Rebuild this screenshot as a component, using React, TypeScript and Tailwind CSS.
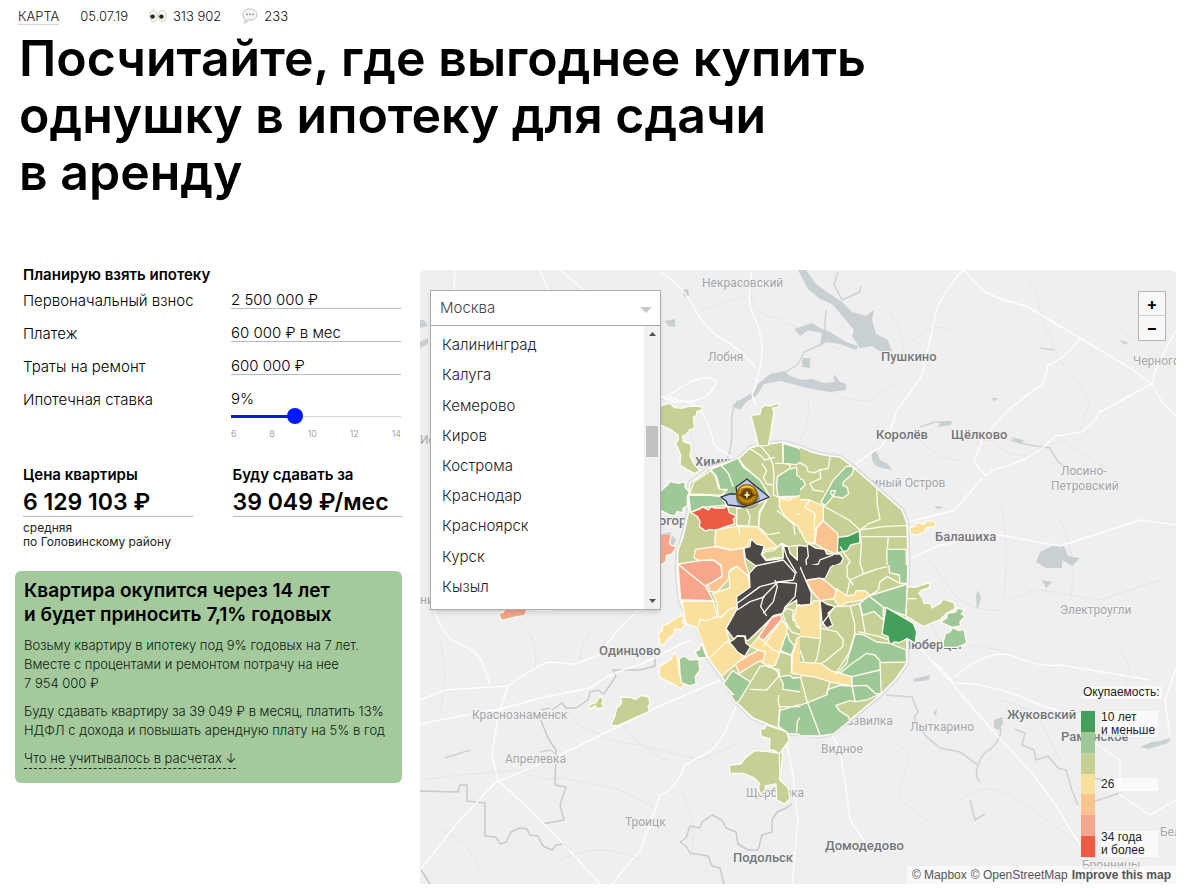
import type React from "react"
import { useState } from "react"

const cities = [
  "Калининград",
  "Калуга",
  "Кемерово",
  "Киров",
  "Кострома",
  "Краснодар",
  "Красноярск",
  "Курск",
  "Кызыл",
]

const GREEN = "#9fc898"
const DARK_GREEN = "#449f5d"
const OLIVE = "#c6cf94"
const YELLOW = "#fbdf9d"
const ORANGE = "#fac38f"
const SALMON = "#f5a68d"
const RED = "#ed5b44"
const BLACK = "#4b4846"

const scale = [DARK_GREEN, GREEN, OLIVE, YELLOW, ORANGE, SALMON, RED]

type Sheet = {
  id: string
  clip: string
  transform: string
  areas: [string, string][]
  lines: string[]
}

// the city is stored as sheets, each with its own origin, 3 units per map unit
const sheets: Sheet[] = [
  {
    id: "north-west",
    clip: "M600 380H800V535H600Z",
    transform: "translate(650 380) scale(.3333)",
    areas: [
      [OLIVE, "20,80 60,70 72,82 95,85 118,78 155,80 157,88 140,95 140,106 130,112 134,145 118,150 110,162 98,168 100,185 122,192 124,212 120,225 130,250 150,272 135,281 110,268 90,255 92,225 82,200 75,192 85,180 84,165 60,148 20,130"],
      [GREEN, "20,345 55,312 60,304 85,310 106,304 105,322 118,335 112,350 112,378 98,385 100,398 80,395 76,408 60,405 20,385"],
      [OLIVE, "303,106 330,103 334,84 345,75 362,78 387,69 385,82 368,84 372,100 368,118 362,160 355,196 325,198 318,165"],
      [OLIVE, "118,342 132,305 182,272 196,288 206,325 230,333 212,346 180,344"],
      [GREEN, "182,268 225,252 264,234 280,262 292,270 330,300 360,350 300,385 235,380 215,350 232,328 210,328 200,290"],
      [GREEN, "116,345 180,346 213,350 232,375 178,380 156,382 122,397"],
      [RED, "122,397 152,386 156,380 175,390 184,380 192,384 222,384 232,378 238,398 260,408 250,418 254,432 220,442 200,452 178,448 168,454 148,440 150,425 142,410"],
      [GREEN, "398,190 440,202 478,224 465,236 440,254 400,250"],
      [GREEN, "382,290 415,268 440,262 440,285 455,295 464,325 456,348 384,350 380,320"],
      [OLIVE, "260,385 300,380 350,360 330,400 325,440 260,436"],
      [YELLOW, "388,354 440,350 500,330 520,330 520,430 495,430 500,510 470,510 445,440 410,415 388,382"],
      [YELLOW, "196,450 252,440 320,440 350,470 385,510 200,506"],
      [ORANGE, "498,440 530,430 530,520 500,520"],
      [SALMON, "20,482 40,474 62,464 66,470 54,490 20,490"],
    ],
    lines: [
      "300,206 330,225 345,240 375,232",
      "330,196 355,225 368,250 372,280 370,345 390,354",
      "398,188 400,250 418,252 422,266",
      "335,250 350,272 340,292 350,312 368,315",
      "375,250 400,250",
      "478,224 455,250 470,262 510,252",
      "210,252 235,280 250,320",
      "265,234 285,262 330,300",
      "350,360 328,395 326,440 352,465 390,458",
      "380,390 430,432 436,470 455,490",
      "290,385 300,410 296,436",
      "265,440 275,490",
      "388,355 420,360 435,348",
      "440,400 480,418 495,440",
    ],
  },
  {
    id: "north-east",
    clip: "M800 420H1000V565H800Z",
    transform: "translate(800 420) scale(.3333)",
    areas: [
      [GREEN, "138,140 155,138 161,146 157,162 130,186 128,196 142,202 146,222 128,234 105,230 92,222 94,212 106,212 100,228 76,256 62,248 100,180"],
      [GREEN, "-10,172 10,180 16,194 0,210"],
      [YELLOW, "-10,238 30,240 70,258 70,300 48,325 42,372 18,366 0,330 -10,330"],
      [ORANGE, "70,302 112,340 120,378 108,402 74,388 45,370 50,325"],
      [DARK_GREEN, "114,352 145,348 178,333 180,368 152,375 142,392 112,398"],
      [GREEN, "260,388 318,388 322,510 300,510 298,466 262,458"],
      [BLACK, "-10,375 22,380 24,370 46,384 74,388 80,402 120,402 130,416 122,430 98,440 96,452 76,460 66,476 20,478 10,500 -10,500"],
      [YELLOW, "328,324 345,318 350,308 375,312 378,302 405,305 408,320 380,322 375,336 350,346 332,340"],
    ],
    lines: [
      "70,258 120,285 150,302 180,330 205,312 240,298 232,255 230,205",
      "180,330 250,320 322,316",
      "180,350 320,350",
      "180,330 184,375 180,430 190,462",
      "90,108 85,145 60,150 62,175 30,190 40,210 72,215",
      "0,128 20,140 24,155 45,158 60,148",
      "265,350 262,385",
      "30,240 14,262 45,280 42,330",
      "120,380 150,425 140,440 142,470",
      "150,478 200,460 250,445 262,457",
      "22,380 25,410 18,420 20,440 0,460",
      "20,440 55,432 60,420 100,405",
    ],
  },
  {
    id: "south-west",
    clip: "M600 535H800V695H600Z",
    transform: "translate(650 530) scale(.3333)",
    areas: [
      [SALMON, "20,5 50,8 65,14 58,38 64,46 80,50 66,72 50,76 48,92 36,104 20,104"],
      [YELLOW, "195,-5 400,-5 400,50 340,60 300,30 288,56 245,60 195,48"],
      [ORANGE, "136,58 195,50 242,60 280,54 286,100 300,140 260,110 240,118 234,150 200,186 180,184 172,162 215,140 214,105 190,90 150,92 132,84"],
      [SALMON, "84,102 150,92 190,90 213,108 216,138 185,158 166,168 190,212 92,210"],
      [YELLOW, "188,190 240,174 236,128 260,108 296,140 300,180 262,200 262,234 205,264 200,215"],
      [YELLOW, "96,214 190,212 202,260 215,262 235,240 255,232 262,236 228,296 240,340 285,380 215,438 176,386 140,292 108,280"],
      [BLACK, "303,26 320,42 343,48 334,74 348,92 398,86 400,48 415,50 420,70 442,90 442,48 470,44 476,56 520,60 520,214 486,214 440,226 440,210 405,232 398,250 372,256 338,290 294,332 288,330 286,318 262,318 252,328 228,296 262,235 260,200 300,172 298,130 318,108 286,85 282,54 300,50"],
      [BLACK, "238,336 252,328 262,318 284,320 288,340 302,350 284,380 262,366 250,350"],
      [OLIVE, "335,70 350,64 370,62 396,40 400,82 372,84 350,90"],
      [OLIVE, "340,-5 440,-5 470,20 468,44 442,46 415,50 395,40 382,50 350,20"],
      [SALMON, "325,322 365,262 392,254 396,268 340,332"],
      [OLIVE, "398,248 410,236 430,240 428,270 440,275 440,290 456,298 456,316 424,306 404,270"],
      [YELLOW, "440,228 486,214 520,212 520,325 458,318 455,295 440,288 432,262"],
      [YELLOW, "300,350 325,322 340,332 396,268 412,292 405,325 390,365 376,405 355,412 330,392 345,365 330,362"],
      [GREEN, "392,362 402,330 412,308 418,330 434,348 424,376"],
      [YELLOW, "424,378 436,350 440,325 452,320 452,400 520,412 520,446 426,430"],
      [ORANGE, "256,402 290,380 326,360 346,366 340,392 322,396 268,430"],
      [GREEN, "220,462 248,422 302,456 268,512"],
      [GREEN, "388,440 420,436 428,444 458,442 456,486 398,478 400,462"],
      [YELLOW, "25,312 38,300 36,288 56,280 70,270 95,256 104,264 96,274 106,284 92,300 74,296 72,312 54,326 40,346 30,344"],
      [YELLOW, "28,410 62,388 76,366 84,392 88,430 102,466 92,476 62,458 28,442"],
      [GREEN, "88,386 102,378 120,390 146,388 150,420 136,440 138,462 120,468 94,458 90,430"],
      [GREEN, "135,366 148,358 154,340 170,382 145,384"],
    ],
    lines: [
      "84,102 120,132 166,168",
      "92,210 200,215",
      "145,290 150,268 170,272 202,260",
      "176,386 228,336 242,336",
      "315,108 400,90 436,130 430,150 384,156 330,170 262,220",
      "384,156 340,200 332,230 350,258",
      "375,150 382,170 370,215 340,250",
      "384,156 440,160",
      "345,200 300,215 262,240",
      "400,48 410,80 440,130",
      "440,160 435,200 405,232",
      "340,332 370,360 392,368",
      "396,268 360,320 340,350",
      "302,456 330,410 360,405 385,428 385,440 350,480 300,478",
      "392,366 428,376 424,430",
      "360,412 388,420 388,440",
    ],
  },
  {
    id: "south-east",
    clip: "M800 565H1000V884H800Z",
    transform: "translate(800 560) scale(.3333)",
    areas: [
      [GREEN, "266,-5 324,-5 322,70 300,70 298,45 268,38"],
      [BLACK, "-10,-5 128,-5 92,22 76,55 30,58 18,62 34,100 32,134 -10,136"],
      [BLACK, "60,120 80,132 105,140 84,160 98,196 80,204 66,186"],
      [ORANGE, "18,62 60,54 78,64 92,76 110,92 102,116 60,122 38,96"],
      [YELLOW, "110,86 140,108 164,104 168,92 195,92 210,106 188,120 140,128 118,140 102,118"],
      [YELLOW, "-10,140 36,132 40,122 60,122 62,236 12,230 -10,230"],
      [GREEN, "206,108 322,72 318,168 250,142"],
      [GREEN, "178,132 206,108 250,142 250,180 222,154 188,166"],
      [DARK_GREEN, "258,142 310,172 340,190 350,215 346,250 322,236 298,248 282,246 270,260 264,230 246,222"],
      [GREEN, "166,222 190,224 230,246 270,250 318,270 320,306 240,308 244,400 200,420 165,425 156,380 155,350 110,344 140,310 152,260"],
      [YELLOW, "-10,306 62,310 92,332 155,350 155,378 92,366 40,350 -10,345"],
      [GREEN, "-10,440 30,425 80,405 84,388 120,376 156,378 165,425 150,422 108,436 118,452 145,470 150,482 100,522 60,528 -10,528"],
      [OLIVE, "322,80 345,82 388,68 390,82 366,90 356,100 366,112 372,130 392,130 396,144 420,130 430,118 462,128 466,146 440,160 422,178 370,200 318,168"],
      [GREEN, "422,186 440,174 442,160 466,156 474,144 494,150 484,162 496,168 480,186 482,198 456,202"],
      [GREEN, "430,244 436,222 450,216 458,202 476,212 492,208 500,250 470,262 430,262"],
    ],
    lines: [
      "178,0 190,42 150,60 140,105",
      "190,42 235,26 262,20",
      "140,0 142,50 160,75",
      "210,106 235,90 240,65 262,50 300,70",
      "322,116 350,116",
      "102,140 150,138 180,130 195,218",
      "105,140 60,200 64,205 110,215 130,240 128,260 80,300 62,312",
      "150,138 164,190 164,220 152,270 105,345",
      "175,215 240,230 265,240",
      "120,340 150,315 200,280 225,285 244,308",
      "155,350 240,330",
      "155,378 200,376 225,400 240,402",
      "62,236 52,290 45,310",
      "0,270 12,305",
      "0,345 20,420 60,525",
      "80,405 90,366",
      "0,20 18,62",
    ],
  },
  {
    id: "south",
    clip: "M420 600H600V695H800V884H420Z",
    transform: "translate(580 660) scale(.3333)",
    areas: [
      [GREEN, "430,72 458,32 512,66 478,122 468,130"],
      [YELLOW, "238,70 298,60 312,76 302,86 272,68"],
      [GREEN, "304,60 360,60 346,72 330,78 304,68"],
      [GREEN, "606,60 668,60 666,96 604,90"],
      [GREEN, "598,152 650,136 690,128 730,100 770,90 770,218 720,228 625,220 596,200"],
      [OLIVE, "540,208 555,205 558,194 590,205 620,216 628,240 612,262 598,282 585,272 568,268 570,236 545,230"],
      [OLIVE, "448,316 482,312 500,290 525,272 565,275 592,280 608,278 604,330 598,358 625,385 630,415 615,432 590,420 588,372 556,378 556,392 540,402 535,380 540,372 520,352 490,340 450,340"],
      [OLIVE, "92,195 104,170 110,145 125,130 122,112 150,112 168,118 185,106 206,112 210,130 204,142 208,154 110,198"],
      [OLIVE, "26,142 30,134 48,128 60,108 70,118 66,130 72,142 50,146 46,136 34,146"],
      [SALMON, "-245,-140 -232,-142 -225,-152 -160,-152 -165,-134 -200,-128 -235,-118"],
      [SALMON, "-135,-155 -85,-155 -85,-149 -135,-149"],
    ],
    lines: [
      "590,55 600,92 594,118 600,150 594,200",
      "600,94 675,100",
      "598,140 660,140 690,128",
      "650,218 652,185 690,128 710,175 720,228",
      "668,90 675,100 690,128",
      "600,350 598,282",
    ],
  },
]

const cityOutline =
  "783,442 800,447 812,452 820,454 830,456 840,457 853,467 877,488 902,510 907,523 908,560 907,617 907,663 895,680 880,695 850,720 833,733 820,736 788,733 777,728 753,718 737,703 722,677 708,658 698,627 687,617 680,600 677,573 678,550 683,537 689,510 688,495 690,483 710,468 737,460 750,448 760,445"

const roads = [
  "M660 271Q684 288 692 304T714 334Q738 346 756 368",
  "M752 270Q748 292 750 308Q762 330 762 350Q762 366 752 395L756 405",
  "M963 270Q940 296 936 312Q930 340 922 375Q908 396 896 412Q892 430 882 446Q858 460 840 480L826 492",
  "M963 270Q976 284 985 292Q1000 300 1026 306L1080 338L1130 368L1152 384L1162 402L1176 416",
  "M1080 338Q1064 360 1048 365Q1046 376 1042 385Q1024 396 1002 416L982 440L974 462L986 476L992 470Q1020 464 1040 450L1056 436L1082 432Q1096 420 1100 412Q1130 396 1140 390L1152 384Q1156 366 1160 360L1176 330",
  "M908 522L955 510L982 478M908 560L940 545L1000 535L1060 546L1140 520L1176 525",
  "M917 645L952 683L976 712L1003 742Q1040 780 1056 806L1080 845M932 660Q945 670 953 683Q990 682 1040 705L1090 720",
  "M420 724Q480 712 500 709L545 697L590 688Q610 672 640 665L690 640M420 700L445 690L508 686Q536 666 548 662L575 664L600 655Q614 630 650 600",
  "M434 609Q440 630 452 640Q474 650 480 658Q486 670 490 685M508 686L498 716L492 755L498 780L530 810L560 840L600 884",
  "M420 870L460 820L495 783L560 755L660 706L725 678M737 704L726 730Q718 744 712 750L685 765Q676 790 660 795Q652 820 640 850L612 884",
  "M785 735L793 775L798 820L792 884M832 735Q842 752 842 764Q848 800 850 820L870 850",
  "M660 396L675 402Q690 398 702 412Q712 430 714 445L735 460M668 396C690 380 708 372 716 382C712 398 690 408 668 396",
  "M1176 668L1165 700L1170 735M1176 800L1150 815L1120 795L1120 760L1090 740M955 677Q985 650 1010 655Q1040 668 1060 665L1150 680",
  "M540 270L552 300M560 270L590 295M455 270L454 292",
]

const minorRoads = [
  "M700 310Q720 304 750 295Q756 310 765 315Q785 320 800 330L840 350M620 720Q636 748 660 750L700 760L735 745M560 700Q576 728 590 730Q610 742 640 745L665 760",
  "M920 440Q940 462 960 460Q974 440 990 440Q1010 458 1030 455L1060 440L1110 470M1020 270Q1040 290 1040 310Q1050 340 1060 360Q1080 384 1090 400L1080 430",
  "M930 560Q950 590 960 600Q980 612 1000 610Q1020 590 1040 590L1100 600L1160 580M420 780L460 775L520 770Q540 782 560 778Q590 782 620 790L660 810",
  "M960 800Q980 784 1000 790Q1020 800 1040 815L1080 845M890 740Q908 748 910 760Q898 784 900 800L940 830M930 610Q930 630 940 640L1000 650",
  "M1110 640Q1128 656 1130 670L1120 700M830 390Q850 404 870 400L900 380M690 430L700 480M1000 700Q1030 706 1040 720L1060 760",
  "M800 440Q812 420 808 400M880 300Q900 320 904 350Q930 320 950 330M1090 300Q1110 330 1140 340M1060 520Q1080 560 1070 600M1000 500Q1010 540 1004 600",
  "M440 640Q450 680 440 710M520 620Q540 640 535 670M600 620Q580 640 580 660M440 830Q470 840 480 870M560 860Q600 840 640 860M680 790Q700 820 690 860",
]

const borders = [
  "M420 791L458 792L460 785L467 785L467 801L485 803L485 836L496 837L500 844L506 842L511 832L520 828L527 829L530 835L538 836L543 846L552 850L556 845L564 844L570 850",
  "M541 710L550 708M540 718L548 738L556 750L555 785L566 787L560 805L564 820L542 824",
  "M552 710L562 703L566 708L576 708L588 700L590 692L598 690L604 694L612 682L616 676L613 670L640 670L655 666L655 656",
  "M792 804L786 808L777 812L772 820L772 832L762 835L758 850L748 850L738 844L736 832L726 828L722 820L712 815L702 822L700 828L690 826L686 838L680 842L686 846L690 853L708 856L712 866L720 868L724 884",
  "M1088 776L1108 782M420 868L430 884",
]

const rivers = [
  "M886 695L912 697L918 712L914 718L925 735Q932 742 940 748L960 752L978 765Q984 750 990 750Q1001 740 1001 728",
  "M978 765Q974 776 980 782M726 462Q732 450 732 430Q730 410 738 400",
  "M1014 729L1025 733L1022 745L1034 750L1036 760L1048 756L1058 768L1066 770L1072 790L1078 805",
  "M1082 805L1105 798L1122 792M920 427L935 422L950 422M1010 440L1030 445L1050 448L1058 462L1070 470",
  "M838 272L834 284L842 300L860 292L861 286M824 340L826 310M780 376L798 364L804 352L822 344",
  "M540 752L550 750L562 758M445 758L470 750M970 800L975 820L985 814M1040 348L1054 350",
]

const water = [
  "M798 270H806L816 284L830 294L842 302L852 312L866 316L874 310L872 320L876 334L888 340L892 352L884 354L872 346L860 348L852 336L854 330L844 318L832 304L820 299L808 289Z",
  "M794 329L812 323L820 328L830 332L846 342L858 346L856 350L840 344L826 342L820 346L822 333L808 330L800 336Z",
  "M754 392L758 384L770 374L784 371L790 376L802 380L812 379L824 383L834 382L834 374L840 382L846 384L846 390L830 392L812 389L800 386L780 381L764 384L756 396L746 402L740 410L732 406L740 400Z",
  "M802 358L810 358L810 368L802 367ZM665 321L675 319L675 327L668 326ZM683 290L688 289L689 296L684 297Z",
  "M872 452L876 450L880 460L888 464L892 470L882 468L876 466L872 460ZM940 422L952 421L951 425L938 427Z",
  "M1036 562L1040 552L1052 546L1064 546L1068 556L1080 558L1072 566L1062 560L1062 568L1046 568ZM1042 580L1052 582L1046 588Z",
  "M994 720L1002 717L1003 723L999 730L994 728ZM913 679L930 675L929 680L914 682ZM933 713L937 709L936 716Z",
  "M1140 747L1152 742L1160 741L1171 738L1168 743L1148 749ZM1010 437L1024 440L1020 444ZM1118 340L1128 342L1126 345Z",
  "M420 320L424 320L428 326L420 328ZM420 342L428 338L428 344L420 348ZM652 550L660 546L662 534L670 532L676 540L668 556Z",
  "M976 596L978 590L981 598L977 610ZM934 506L944 507L938 509ZM992 398L998 398L994 402Z",
]

const bigTowns: [string, number, number][] = [
  ["Пушкино", 881, 361],
  ["Королёв", 876, 439],
  ["Щёлково", 951, 439],
  ["Химки", 695, 466],
  ["Балашиха", 935, 541],
  ["Одинцово", 599, 655],
  ["Люберцы", 902, 649],
  ["Жуковский", 1007, 719],
  ["Раменское", 1061, 741],
  ["Подольск", 733, 862],
  ["Домодедово", 825, 850],
  ["Красногорск", 622, 525],
]

const smallTowns: [string, number, number][] = [
  ["Некрасовский", 702, 287],
  ["Лобня", 708, 361],
  ["Черноголовка", 1133, 365],
  ["Лосино-", 1061, 475],
  ["Петровский", 1051, 490],
  ["Лосиный Остров", 850, 487],
  ["Электроугли", 1060, 614],
  ["Краснознаменск", 472, 719],
  ["Апрелевка", 505, 763],
  ["Лыткарино", 910, 731],
  ["Развилка", 839, 725],
  ["Видное", 821, 753],
  ["Щербинка", 746, 797],
  ["Троицк", 625, 826],
  ["Белоозёрский", 1160, 836],
  ["Бронницы", 1082, 869],
  ["Ист", 420, 444],
  ["ни", 420, 604],
]

const CityMap: React.FC = () => (
  <svg
    className="absolute inset-0 h-full w-full"
    viewBox="420 270 756 614"
    preserveAspectRatio="xMidYMid slice"
    aria-label="Карта окупаемости по районам Москвы"
  >
    <defs>
      {sheets.map((sheet) => (
        <clipPath key={sheet.id} id={sheet.id}>
          <path d={sheet.clip} />
        </clipPath>
      ))}
      <radialGradient id="coin" cx=".5" cy=".45" r=".55">
        <stop offset="0" stopColor="#b07c08" />
        <stop offset=".35" stopColor="#5e3d03" />
        <stop offset=".6" stopColor="#c99212" />
        <stop offset=".8" stopColor="#9a6806" />
        <stop offset="1" stopColor="#4a3002" />
      </radialGradient>
    </defs>

    <rect x="0" y="0" width="1700" height="1200" fill="#efefef" />
    <g fill="none" strokeLinejoin="round">
      {minorRoads.map((d) => (
        <path key={d} d={d} stroke="#e3e5e6" />
      ))}
      {borders.map((d) => (
        <path key={d} d={d} stroke="#c8cacb" strokeWidth="1.5" />
      ))}
      {rivers.map((d) => (
        <path key={d} d={d} stroke="#ccd2d5" strokeWidth="1.5" />
      ))}
      {water.map((d) => (
        <path key={d} d={d} fill="#c8d0d3" />
      ))}
      {roads.map((d) => (
        <path key={d} d={d} stroke="#fdfdfd" strokeWidth="1.5" />
      ))}
    </g>

    <g fontFamily="Roboto, sans-serif" stroke="#f4f4f4" strokeWidth="2" paintOrder="stroke" strokeLinejoin="round">
      {smallTowns.map(([name, x, y]) => (
        <text key={name} x={x} y={y} fontSize="12" fill="#a3a6a9">{name}</text>
      ))}
      {bigTowns.map(([name, x, y]) => (
        <text key={name} x={x} y={y} fontSize="13" fontWeight="500" fill="#74777a">{name}</text>
      ))}
    </g>

    <polygon points={cityOutline} fill="none" stroke="#dedede" strokeWidth="5" strokeLinejoin="round" />
    <polygon points={cityOutline} fill={OLIVE} stroke="#fff" strokeWidth="1.5" />
    {sheets.map((sheet) => (
      <g key={sheet.id} clipPath={`url(#${sheet.id})`}>
        <g transform={sheet.transform} stroke="#fffdf0" strokeWidth="4" strokeLinejoin="round">
          {sheet.areas.map(([fill, points]) => (
            <polygon key={points} points={points} fill={fill} />
          ))}
          {sheet.lines.map((points) => (
            <polyline key={points} points={points} fill="none" />
          ))}
        </g>
      </g>
    ))}

    {/* selected district and its coin */}
    <polygon
      points="721,497 730,494 737,494 736,487 747,479 769,497 760,501 744,507 728,505 726,501"
      fill="#bfcbe6"
      stroke="#2b3045"
      strokeWidth="1.3"
    />
    <ellipse cx="748" cy="499" rx="12" ry="10" fill="#22273a" opacity=".3" />
    <circle cx="747" cy="495" r="11" fill="url(#coin)" />
    <path d="M739 489Q747 482 755 489Q747 486 739 489Z" fill="#ffe06a" opacity=".8" />
    <path d="M737 495Q747 491 757 495Q747 500 737 495Z" fill="#3d2600" opacity=".6" />
    <path d="M747 491L748 494L751 495L748 496L747 499L746 496L743 495L746 494Z" fill="#fff8c8" />
  </svg>
)

const CitySelect: React.FC = () => {
  const [city, setCity] = useState("Москва")

  return (
    <div className="absolute left-[10px] top-5 w-[231px] border border-[#adadad] bg-white shadow-md">
      <div className="relative h-[35px] border-b border-[#a5a5a5]">
        <select
          aria-label="Город"
          value={city}
          onChange={(e) => setCity(e.target.value)}
          className="h-full w-full appearance-none bg-white px-[9px] pt-px text-[15px] font-light text-[#444]"
        >
          <option>Москва</option>
          {cities.map((name) => (
            <option key={name}>{name}</option>
          ))}
        </select>
        <svg className="pointer-events-none absolute right-2 top-4 h-[6px] w-3" viewBox="0 0 12 6">
          <path d="M0 0H12L6 6Z" fill="#c9c9c9" />
        </svg>
      </div>
      <div className="flex h-[283px]">
        <ul className="flex flex-1 flex-col pb-[7px] pt-1" role="listbox" aria-label="Города">
          {cities.map((name) => (
            <li
              key={name}
              role="option"
              aria-selected={city === name}
              onClick={() => setCity(name)}
              className="flex flex-1 cursor-pointer items-center px-[11px] text-[15px] font-light leading-5 text-[#222]"
            >
              {name}
            </li>
          ))}
        </ul>
        <div className="flex w-4 flex-col items-center bg-[#f1f1f1] py-[6px]" aria-hidden="true">
          <svg className="h-1 w-[7px]" viewBox="0 0 7 4">
            <path d="M0 4H7L3.5 0Z" fill="#505050" />
          </svg>
          <div className="mt-[90px] h-[31px] w-3 bg-[#c1c1c1]" />
          <svg className="mt-auto h-1 w-[7px]" viewBox="0 0 7 4">
            <path d="M0 0H7L3.5 4Z" fill="#505050" />
          </svg>
        </div>
      </div>
    </div>
  )
}

const Legend: React.FC = () => (
  <div className="absolute bottom-[27px] right-[14px] w-[81px] font-['Liberation_Sans',sans-serif] text-[12px] leading-[13px] text-[#222]">
    <div className="ml-[2px] whitespace-nowrap bg-white/60">Окупаемость:</div>
    <div className="mt-3 flex h-[146px] pr-1">
      <div className="flex w-[14px] flex-col">
        {scale.map((color) => (
          <div key={color} className="flex-1" style={{ backgroundColor: color }} />
        ))}
      </div>
      <div className="ml-[6px] flex flex-1 flex-col justify-between whitespace-nowrap">
        <div className="bg-white/70">10 лет<br />и меньше</div>
        <div className="bg-white/70">26</div>
        <div className="bg-white/70">34 года<br />и более</div>
      </div>
    </div>
  </div>
)

type FieldProps = { id: string; label: string; value: string }

const Field: React.FC<FieldProps> = ({ id, label, value }) => (
  <div className="flex h-[33px] items-start">
    <label htmlFor={id} className="w-[208px] pt-[7px] leading-5">{label}</label>
    <input
      id={id}
      defaultValue={value}
      className="h-[25px] w-[170px] border-b border-[#b4b9d2] bg-transparent pt-[7px] leading-[18px] outline-none"
    />
  </div>
)

export default function App() {
  const [rate, setRate] = useState(9)

  return (
    <div className="min-h-screen bg-white pb-[5px] pl-[15px] pr-6 font-['Inter','Noto_Sans',sans-serif] text-black">
      <header>
        <div className="flex h-[30px] items-center gap-[21px] pl-[3px] pt-[2px] text-[13px] font-light leading-4 text-[#111]">
          <a href="#map" className="border-b border-[#d5d5d5]">КАРТА</a>
          <span>05.07.19</span>
          <span className="flex items-center gap-[6px]">
            <svg className="h-[14px] w-[18px]" viewBox="0 0 18 14">
              <g fill="#f6f5f2" stroke="#cfc9c0" strokeWidth=".8">
                <ellipse cx="4.5" cy="7" rx="3.9" ry="6" />
                <ellipse cx="13.5" cy="7" rx="3.9" ry="6" />
              </g>
              <circle cx="3.6" cy="7.6" r="2.2" fill="#2c2118" />
              <circle cx="12.4" cy="7.6" r="2.2" fill="#2c2118" />
            </svg>
            313 902
          </span>
          <span className="flex items-center gap-[6px]">
            <svg className="h-4 w-4" viewBox="0 0 16 16">
              <path d="M8 1C12 1 15 3.4 15 6.6S12 12.2 8 12.2Q6.6 12.2 5.6 12Q5 14.6 2.4 15.2Q3.6 13.4 3.2 11.2Q1 9.4 1 6.6C1 3.4 4 1 8 1Z" fill="#f5f5f5" stroke="#b3b3b3" strokeWidth=".9" />
              <g fill="#777">
                <circle cx="5" cy="6.4" r=".8" />
                <circle cx="8" cy="6.4" r=".8" />
                <circle cx="11" cy="6.4" r=".8" />
              </g>
            </svg>
            233
          </span>
        </div>
        <h1 className="pl-1 text-[50px] font-semibold leading-[57px]">
          Посчитайте, где выгоднее купить
          <br />
          однушку в ипотеку для сдачи
          <br />
          в аренду
        </h1>
      </header>

      <main className="mt-[65px] flex items-start gap-[18px]">
        <section className="w-[387px] shrink-0">
          <form className="pl-2 text-[15px] font-light">
            <h2 className="text-[15px] font-semibold leading-[18px]">Планирую взять ипотеку</h2>
            <Field id="deposit" label="Первоначальный взнос" value="2 500 000 ₽" />
            <Field id="payment" label="Платеж" value="60 000 ₽ в мес" />
            <Field id="repair" label="Траты на ремонт" value="600 000 ₽" />
            <div className="flex items-start">
              <label htmlFor="rate" className="w-[208px] pt-[7px] leading-5">Ипотечная ставка</label>
              <div className="w-[170px] pt-[7px]">
                <div className="leading-[18px]">{rate}%</div>
                <div className="relative h-4">
                  <div className="absolute inset-x-0 top-2 h-px bg-[#d5d5dc]" />
                  <div
                    className="absolute left-0 top-[7px] h-[3px] bg-[#0c1fc4]"
                    style={{ width: `${((rate - 6) / 8) * 100}%` }}
                  />
                  <input
                    id="rate"
                    type="range"
                    min={6}
                    max={14}
                    value={rate}
                    onChange={(e) => setRate(Number(e.target.value))}
                    className="absolute -left-2 top-0 h-4 w-[186px] appearance-none bg-transparent [&::-webkit-slider-thumb]:h-4 [&::-webkit-slider-thumb]:w-4 [&::-webkit-slider-thumb]:appearance-none [&::-webkit-slider-thumb]:rounded-full [&::-webkit-slider-thumb]:bg-[#0019ff]"
                  />
                </div>
                <div className="mt-1 flex justify-between text-[9px] leading-3 text-[#888]">
                  <span>6</span>
                  <span>8</span>
                  <span>10</span>
                  <span>12</span>
                  <span>14</span>
                </div>
              </div>
            </div>
          </form>

          <div className="mt-[26px] flex gap-10 pl-2">
            <div className="w-[170px]">
              <h3 className="text-[15px] font-semibold leading-[18px]">Цена квартиры</h3>
              <div className="border-b border-[#b4b9d2] pt-1 text-[23px] font-semibold leading-7">6 129 103 ₽</div>
              <p className="pt-1 text-[12px] leading-[14px] text-[#222]">
                средняя
                <br />
                по Головинскому району
              </p>
            </div>
            <div className="w-[170px]">
              <h3 className="text-[15px] font-semibold leading-[18px]">Буду сдавать за</h3>
              <div className="border-b border-[#b4b9d2] pt-1 text-[23px] font-semibold leading-7">39 049 ₽/мес</div>
            </div>
          </div>

          <div className="mt-[22px] rounded-md bg-[#a3c99d] px-[9px] pb-[14px] pt-2 text-[13px] font-light leading-[19px] text-[#101a0f]">
            <h2 className="text-[19px] font-semibold leading-6 text-black">
              Квартира окупится через 14 лет
              <br />
              и будет приносить 7,1% годовых
            </h2>
            <p className="mt-[9px]">
              Возьму квартиру в ипотеку под 9% годовых на 7 лет.
              <br />
              Вместе с процентами и ремонтом потрачу на нее
              <br />
              7 954 000 ₽
            </p>
            <p className="mt-[9px]">
              Буду сдавать квартиру за 39 049 ₽ в месяц, платить 13%
              <br />
              НДФЛ с дохода и повышать арендную плату на 5% в год
            </p>
            <a href="#notes" className="mt-[9px] inline-block border-b border-dashed border-[#1c2a1b]">
              Что не учитывалось в расчетах ↓
            </a>
          </div>
        </section>

        <section id="map" className="relative mt-1 h-[614px] flex-1 overflow-hidden rounded-t-md bg-[#efefef]">
          <CityMap />
          <CitySelect />
          <div className="absolute right-[10px] top-[21px] flex w-7 flex-col divide-y divide-[#ccc] border border-[#b5b5b5] bg-[#f8f8f8] text-[16px] font-bold">
            <button type="button" aria-label="Приблизить" className="h-6 leading-6">+</button>
            <button type="button" aria-label="Отдалить" className="h-6 leading-6">−</button>
          </div>
          <Legend />
          <div className="absolute bottom-0 right-0 flex gap-1 bg-white/60 px-[5px] font-['Liberation_Sans',sans-serif] text-[12px] leading-[18px] text-[#555]">
            <a href="#mapbox">© Mapbox</a>
            <a href="#osm">© OpenStreetMap</a>
            <a href="#improve" className="font-bold">Improve this map</a>
          </div>
        </section>
      </main>
    </div>
  )
}
